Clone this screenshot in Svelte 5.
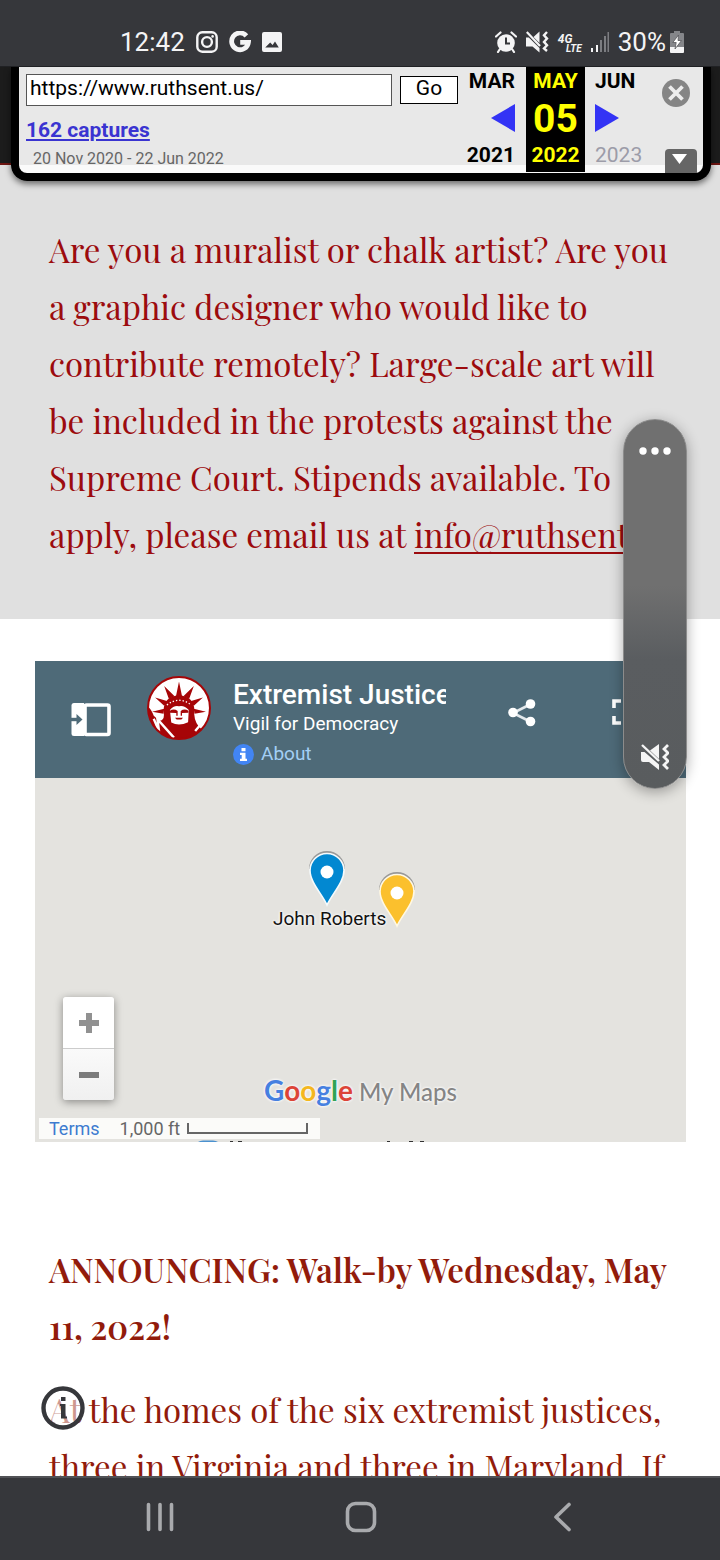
<script>
  let url = $state('https://www.ruthsent.us/');
</script>

<div class="screen">
  <header class="status">
    <div class="group">
      <span class="clock">12:42</span>
      <svg width="22" height="22" viewBox="0 0 22 22" fill="none" stroke="#f4f4f5" stroke-width="2.4">
        <rect x="1.3" y="1.3" width="19.4" height="19.4" rx="5" />
        <circle cx="11" cy="11" r="4.9" />
        <circle cx="16.6" cy="5.4" r="1.3" fill="#f4f4f5" stroke="none" />
      </svg>
      <svg class="g" width="22" height="22" viewBox="0 0 22 22" fill="none" stroke="#f4f4f5" stroke-width="4.8">
        <path d="M17.4 4.8A8.400 8.400 0 1 0 19.400 11.400H11.200" />
      </svg>
      <svg width="20" height="20" viewBox="0 0 20 20">
        <path fill="#f4f4f5" d="M2 0h16a2 2 0 0 1 2 2v16a2 2 0 0 1-2 2H2a2 2 0 0 1-2-2V2a2 2 0 0 1 2-2zM3.200 15.500h13.600l-3.800-6-2.400 3.600-2.400-2.600z" fill-rule="evenodd" />
      </svg>
    </div>
    <div class="group right">
      <svg width="22" height="22" viewBox="0 0 22 22">
        <circle cx="11" cy="12" r="8.800" fill="#f4f4f5" />
        <path d="M1 5.500L5.500 1.500M21 5.500L16.500 1.500M4.600 18.500L3 21M17.400 18.500L19 21" stroke="#f4f4f5" stroke-width="2.200" stroke-linecap="round" />
        <path d="M11 6.500V12.500H15" fill="none" stroke="#36373b" stroke-width="2" />
      </svg>
      <svg width="23" height="24" viewBox="0 0 23 24">
        <path fill="#f4f4f5" d="M7.500 7L13.500 1.500V13zM0 7.500h2.800L13.500 18v4.500L6.500 16.500H0z" />
        <path d="M.8 2L14 16" stroke="#f4f4f5" stroke-width="2.200" />
        <path d="M21 2l-3 3.300 3 3.300-3 3.300 3 3.300-3 3.300 3 2.500" fill="none" stroke="#f4f4f5" stroke-width="2.400" />
      </svg>
      <span class="net"><b>4G</b><b class="lte">LTE</b></span>
      <svg width="18" height="20" viewBox="0 0 18 20">
        <path fill="#f4f4f5" d="M0 16h2v4H0zM5 13h2v7H5z" />
        <path fill="#7c7d81" d="M9 8h2v12H9zM13 4h2v16h-2zM16.500 0H18v20h-1.500z" />
      </svg>
      <span class="pct">30%</span>
      <svg class="batt" width="14" height="22" viewBox="0 0 14 22">
        <path fill="#85868a" d="M4 0h6v2h3q1 0 1 1v13H0V3q0-1 1-1h3z" />
        <path fill="#f4f4f5" d="M0 16h14v5q0 1-1 1H1q-1 0-1-1z" />
        <path fill="#fff" stroke="#55565a" stroke-width=".8" d="M8.500 4L2.800 11.500h3.400L5 18l6.500-8.500H8z" />
      </svg>
    </div>
  </header>

  <main>
    <div class="site-top"></div>

    <section class="archive" aria-label="Archive toolbar">
      <div class="left">
        <form onsubmit={(e) => e.preventDefault()}>
          <input type="text" aria-label="Address" bind:value={url} />
          <button class="go">Go</button>
        </form>
        <a class="captures" href="#captures">162 captures</a>
        <div class="range">20 Nov 2020 - 22 Jun 2022</div>
      </div>
      <div class="month prev">
        <b>MAR</b>
        <a href="#prev" aria-label="Previous capture"><svg width="24" height="28" viewBox="0 0 24 28"><path fill="#3333f5" d="M24 0v28L0 14z" /></svg></a>
        <b>2021</b>
      </div>
      <div class="month now"><b>MAY</b><strong>05</strong><b>2022</b></div>
      <div class="month next">
        <b>JUN</b>
        <a href="#next" aria-label="Next capture"><svg width="24" height="28" viewBox="0 0 24 28"><path fill="#3333f5" d="M0 0v28l24-14z" /></svg></a>
        <span>2023</span>
      </div>
      <div class="tools">
        <button aria-label="Close toolbar">
          <svg width="28" height="28" viewBox="0 0 28 28"><circle cx="14" cy="14" r="14" fill="#858585" /><path d="M7.500 7.500l13 13M20.500 7.500l-13 13" stroke="#ededed" stroke-width="3.800" /></svg>
        </button>
        <button aria-label="Expand toolbar">
          <svg width="32" height="24" viewBox="0 0 32 24"><path fill="#666" d="M0 24V4a4 4 0 0 1 4-4h24a4 4 0 0 1 4 4v20z" /><path fill="#fff" d="M7 5h15l-7.500 10z" /></svg>
        </button>
      </div>
    </section>

    <section class="hero">
      <p>
        Are you a muralist or chalk artist? Are you<br />a graphic designer who would like to<br />contribute remotely? Large-scale art will<br />be included in the protests against the<br />Supreme Court. Stipends available. To<br />apply, please email us at <a href="#mail">info@ruthsent.us</a>
      </p>
    </section>

    <section class="map">
      <header class="maphead">
        <button class="legend" aria-label="Show legend">
          <svg width="40" height="34" viewBox="0 0 40 34">
            <rect x="14" y="2" width="24" height="29.500" rx="1.500" fill="none" stroke="#fff" stroke-width="3.600" />
            <path fill="#fff" d="M3 0h10v33H3q-2.500 0-2.500-2.500v-28Q.5 0 3 0z" />
            <path d="M0 16.500h7" stroke="#4e6a78" stroke-width="3.400" /><path fill="#4e6a78" d="M5.500 11v11l6-5.500z" />
          </svg>
        </button>
        <svg class="logo" width="64" height="64" viewBox="0 0 190 190">
          <defs><clipPath id="disc"><circle cx="95" cy="95" r="92" /></clipPath></defs>
          <circle cx="95" cy="95" r="92" fill="#fff" />
          <g clip-path="url(#disc)">
            <path fill="#a60507" d="M50 112Q44 62 95 57Q146 62 140 112Q142 142 162 158L130 190H60L20 155L0 130V88Q12 96 20 118L36 133Q52 132 50 112z" />
            <path fill="#a60507" d="M86 60L95 16L104 60zM65 68L51 30L82 60zM108 60L139 30L125 68zM51 88L24 64L64 76zM126 76L166 64L139 88zM49 112L15 106L51 97zM139 97L175 106L141 112z" />
            <path d="M59 86Q95 58 131 86" fill="none" stroke="#fff" stroke-width="4" stroke-dasharray="4 6" />
            <path fill="#fff" d="M68 101Q80 86 95 90Q110 86 124 101L122 137Q95 150 72 138z" />
            <path fill="#a60507" d="M68 103Q80 96 91 104V118H87V110L68 109zM123 103Q111 96 100 104V118H104V110L123 109zM83 124H107L102 129H88z" />
            <path d="M20 127L36 165L31 128L80 183M143 163L160 143" fill="none" stroke="#fff" stroke-width="7" />
          </g>
          <circle cx="95" cy="95" r="92" fill="none" stroke="#a60507" stroke-width="6" />
        </svg>
        <div class="titles">
          <h2>Extremist Justices</h2>
          <div>Vigil for Democracy</div>
          <a href="#about"><svg width="21" height="21" viewBox="0 0 21 21"><circle cx="10.500" cy="10.500" r="10.500" fill="#4285f4" /><path fill="#fff" d="M8.500 4h4v3.300h-4zM7 8.700h5.500v6H14V17H7v-2.300h1.700v-3.600H7z" /></svg>About</a>
        </div>
        <button class="share" aria-label="Share">
          <svg width="28" height="28" viewBox="0 0 28 28"><path d="M23 5L5 14l18 9" fill="none" stroke="#e4e9ec" stroke-width="2.600" /><g fill="#fff"><circle cx="22.500" cy="5" r="4.800" /><circle cx="5" cy="13.500" r="4.800" /><circle cx="22.500" cy="22.500" r="4.800" /></g></svg>
        </button>
        <button aria-label="Full screen">
          <svg width="26" height="26" viewBox="0 0 26 26" fill="none" stroke="#fff" stroke-width="3.600"><path d="M2 9V2h7M17 2h7v7M24 17v7h-7M9 24H2v-7" /></svg>
        </button>
      </header>
      <div class="canvas">
        <svg class="pin blue" width="38" height="56" viewBox="0 0 38 56"><path fill="#999" d="M1 18a18 18 0 0 1 36 0z" /><path fill="#0288d1" stroke="#f5fafc" stroke-width="1.600" d="M19 54C14 43 2 31 2 19.500a17 17 0 0 1 34 0C36 31 24 43 19 54z" /><circle cx="19" cy="21" r="6.500" fill="#fff" /></svg>
        <svg class="pin yellow" width="38" height="56" viewBox="0 0 38 56"><path fill="#999" d="M1 18a18 18 0 0 1 36 0z" /><path fill="#fbc02d" stroke="#fff8e3" stroke-width="1.600" d="M19 54C14 43 2 31 2 19.500a17 17 0 0 1 34 0C36 31 24 43 19 54z" /><circle cx="19" cy="21" r="6.500" fill="#fff" /></svg>
        <span class="place">John Roberts</span>
        <div class="zoom">
          <button aria-label="Zoom in"><svg width="20" height="20" viewBox="0 0 20 20"><path fill="#919191" d="M7 0h6v7h7v6h-7v7H7v-7H0V7h7z" /></svg></button>
          <button aria-label="Zoom out"><svg width="20" height="20" viewBox="0 0 20 20"><path fill="#7b7b7b" d="M0 7h20v6H0z" /></svg></button>
        </div>
        <div class="brand"><span class="google"><i class="b">G</i><i class="r">o</i><i class="y">o</i><i class="b">g</i><i class="gr">l</i><i class="r">e</i></span><span>My Maps</span></div>
        <div class="scale"><a href="#terms">Terms</a><span>1,000 ft</span><i class="ruler"></i></div>
        <svg class="edge" width="240" height="2" viewBox="0 0 240 2"><path fill="#4b91cf" d="M2 2q2-1.500 5-1.500h10q3 0 5 1.500z" /><path fill="#333" d="M34 1h3v1h-3zM42 1h4v1h-4zM191 1h3v1h-3zM213 1h4v1h-4zM224 1h4v1h-4z" /></svg>
      </div>
    </section>

    <section class="news">
      <h1>ANNOUNCING: Walk-by Wednesday, May<br />11, 2022!</h1>
      <p>At the homes of the six extremist justices,<br />three in Virginia and three in Maryland. If</p>
      <button class="info" aria-label="Page information">
        <svg width="44" height="44" viewBox="0 0 44 44"><circle cx="22" cy="22" r="19.500" fill="#ffffff8c" stroke="#36373b" stroke-width="4.400" /><path fill="#36373b" d="M20 11h4.500v4H20zM19 18h5.500v12.500h1.500v2h-6V20h-1z" /></svg>
      </button>
    </section>
  </main>

  <aside class="volume" aria-label="Volume">
    <button aria-label="More sound settings"><svg width="32" height="8" viewBox="0 0 32 8" fill="#fff"><circle cx="4" cy="4" r="3.700" /><circle cx="16" cy="4" r="3.700" /><circle cx="28" cy="4" r="3.700" /></svg></button>
    <button aria-label="Vibrate">
      <svg width="28" height="28" viewBox="0 0 28 28"><path fill="#f5f5f5" d="M9 7.500L18 1v15zM0 9h3.500L18 21.500V27L8 19H2q-2 0-2-2z" /><path d="M1 2l17 16" stroke="#f5f5f5" stroke-width="2.400" /><path d="M27 2l-4 4 4 4-4 4 4 4-4 4 4 4" fill="none" stroke="#f5f5f5" stroke-width="2.800" /></svg>
    </button>
  </aside>

  <nav>
    <button aria-label="Recent apps"><svg width="28" height="30" viewBox="0 0 28 30" stroke="#a9aaad" stroke-width="3.600" stroke-linecap="round"><path d="M2.500 2.500v25M14 2.500v25M25.500 2.500v25" /></svg></button>
    <button aria-label="Home"><svg width="32" height="32" viewBox="0 0 32 32"><rect x="2.500" y="2.500" width="27" height="27" rx="8" fill="none" stroke="#a9aaad" stroke-width="3.600" /></svg></button>
    <button aria-label="Back"><svg width="18" height="30" viewBox="0 0 18 30"><path d="M16 2.500L3 15l13 12.500" fill="none" stroke="#a9aaad" stroke-width="3.600" stroke-linecap="round" stroke-linejoin="round" /></svg></button>
  </nav>
</div>

<style>
  :global(body) { margin: 0; background: #fff; }
  * { box-sizing: border-box; }
  svg { display: block; flex: none; }
  button { padding: 0; border: 0; background: none; font: inherit; color: inherit; }
  .screen { position: relative; display: flex; flex-direction: column; height: 100vh; overflow: hidden; font-family: Roboto, sans-serif; }
  .status { display: flex; justify-content: space-between; align-items: center; height: 67px; padding: 17px 36px 0 120px; background: #36373b; border-bottom: 1px solid #202124; color: #f4f4f5; font-size: 26px; }
  .group { display: flex; align-items: center; gap: 11px; }
  .group.right { gap: 9px; }
  .batt { margin-left: -5px; }
  .net { display: flex; flex-direction: column; width: 24px; padding-top: 4px; font-size: 12px; line-height: 9px; font-style: italic; }
  .lte { align-self: flex-end; font-size: 10px; }

  main { position: relative; flex: 1; min-height: 0; overflow: hidden; }
  .site-top { height: 98px; background: #1c1c1c; border-bottom: 2px solid #6e1512; }
  .archive { position: absolute; top: 0; left: 11px; right: 9px; height: 114px; display: flex; padding-left: 7px; border: 8px solid #000; border-top: 0; border-radius: 0 0 16px 16px; background: linear-gradient(#e8e8e8 98px, #fafafa 98px); box-shadow: 0 3px 6px #0008; }
  .left { flex: 1; min-width: 0; padding-top: 7px; }
  form { display: flex; align-items: center; gap: 8px; }
  input { flex: 1; min-width: 0; height: 32px; padding: 0 3px 4px; border: 1px solid #555; background: #fff; font: 21px Roboto, sans-serif; color: #000; }
  .go { width: 58px; height: 28px; padding-bottom: 4px; border: 1px solid #000; background: #fff; font-size: 21px; line-height: 20px; }
  .captures { display: block; width: max-content; margin-top: 12px; font-size: 21px; line-height: 24px; font-weight: 700; color: #3a34d1; }
  .range { margin: 7px 0 0 7px; font-size: 16px; line-height: 20px; color: #666; }
  .month { display: flex; flex-direction: column; justify-content: space-between; padding: 2px 0 5px; height: 105px; font-size: 21px; line-height: 24px; }
  .prev { width: 68px; padding-right: 11px; text-align: right; }
  .prev a { align-self: flex-end; }
  .now { width: 59px; align-items: center; background: #000; color: #ff0; }
  .now strong { font-size: 39px; line-height: 40px; padding-top: 2px; }
  .next { width: 66px; padding-left: 10px; }
  .next span { color: #9c9ca8; }
  .tools { display: flex; flex-direction: column; justify-content: space-between; align-items: flex-end; width: 52px; padding: 12px 6px 0 0; }
  .tools button:first-child { padding-right: 7px; }

  .hero { padding: 56px 0; background: #e0e0e0; color: #9c0b0e; }
  .hero p, .news p, h1 { margin: 0; font-family: "Playfair Display", "Liberation Serif", serif; font-size: 33px; line-height: 57px; white-space: nowrap; }
  .hero p { margin-left: 49px; }
  .hero a { color: inherit; text-decoration-thickness: 2px; text-underline-offset: 4px; text-decoration-skip-ink: none; }

  .map { margin: 42px 34px 0 35px; }
  .maphead { display: flex; height: 117px; padding: 0 34px 0 36px; background: #4e6a78; color: #fff; }
  .legend { align-self: center; }
  .logo { margin: 15px 22px 0 36px; }
  .titles { width: 213px; padding-top: 18px; font-size: 19px; line-height: 26px; }
  h2 { margin: 0; overflow: hidden; white-space: nowrap; font-size: 28px; line-height: 32px; font-weight: 500; }
  .titles a { display: flex; align-items: center; gap: 7px; margin-top: 4px; color: #a3cff5; text-decoration: none; }
  .share { margin: 0 76px 0 62px; }
  .maphead > button:not(.legend) { align-self: flex-start; padding-top: 38px; }
  .canvas { position: relative; height: 364px; background: #e4e3df; overflow: hidden; }
  .pin { position: absolute; }
  .blue { left: 273px; top: 73px; }
  .yellow { left: 343px; top: 94px; }
  .place { position: absolute; left: 238px; top: 130px; font-size: 19px; line-height: 22px; color: #111; text-shadow: 0 0 3px #fff, 0 0 3px #fff; }
  .zoom { position: absolute; left: 28px; bottom: 42px; width: 51px; border-radius: 3px; overflow: hidden; box-shadow: 0 2px 8px #0006; }
  .zoom button { display: grid; place-items: center; width: 100%; height: 51px; background: #fff; }
  .zoom button + button { border-top: 1px solid #ccc; height: 52px; background: linear-gradient(#fafafa, #f0f0f0); }
  .brand { position: absolute; left: 0; right: 0; bottom: 32px; display: flex; justify-content: center; align-items: baseline; gap: 6px; font-family: Lato, sans-serif; font-size: 24px; line-height: 36px; font-weight: 500; color: #858585; text-shadow: 0 0 3px #fff, 0 0 3px #fff; }
  .google { font-size: 28px; font-weight: 700; }
  i { font-style: normal; }
  .b { color: #4680e0; } .r { color: #dc4437; } .y { color: #f4b71f; } .gr { color: #31a354; }
  .scale { position: absolute; left: 4px; bottom: 3px; display: flex; align-items: center; width: 281px; height: 21px; padding-left: 10px; background: #fbfbf9; font-size: 18px; line-height: 21px; color: #666; }
  .scale a { margin-right: 20px; color: #3d7bd0; text-decoration: none; }
  .ruler { width: 121px; height: 11px; margin-left: 7px; border: 2px solid #666; border-top: 0; }
  .edge { position: absolute; left: 161px; bottom: 0; }

  .news { position: relative; padding: 99px 0 0 49px; color: #921b0b; }
  .news p { margin-top: 26px; }
  .news h1 { font-weight: 600; }
  .info { position: absolute; left: 41px; top: 244px; }

  .volume { position: absolute; right: 33px; top: 419px; width: 64px; height: 370px; display: flex; flex-direction: column; align-items: center; justify-content: space-between; padding: 27px 0 17px; border-radius: 32px; background: linear-gradient(#707070 45%, #5a5d60 65%, #595c5e); border: 1px solid #8c8c8c; box-shadow: 0 3px 14px #0005; }

  nav { display: grid; grid-template-columns: repeat(3, 201px); justify-content: center; justify-items: center; height: 84px; border-top: 2px solid #515256; padding: 0 0 4px 2px; background: #36373b; }
</style>
